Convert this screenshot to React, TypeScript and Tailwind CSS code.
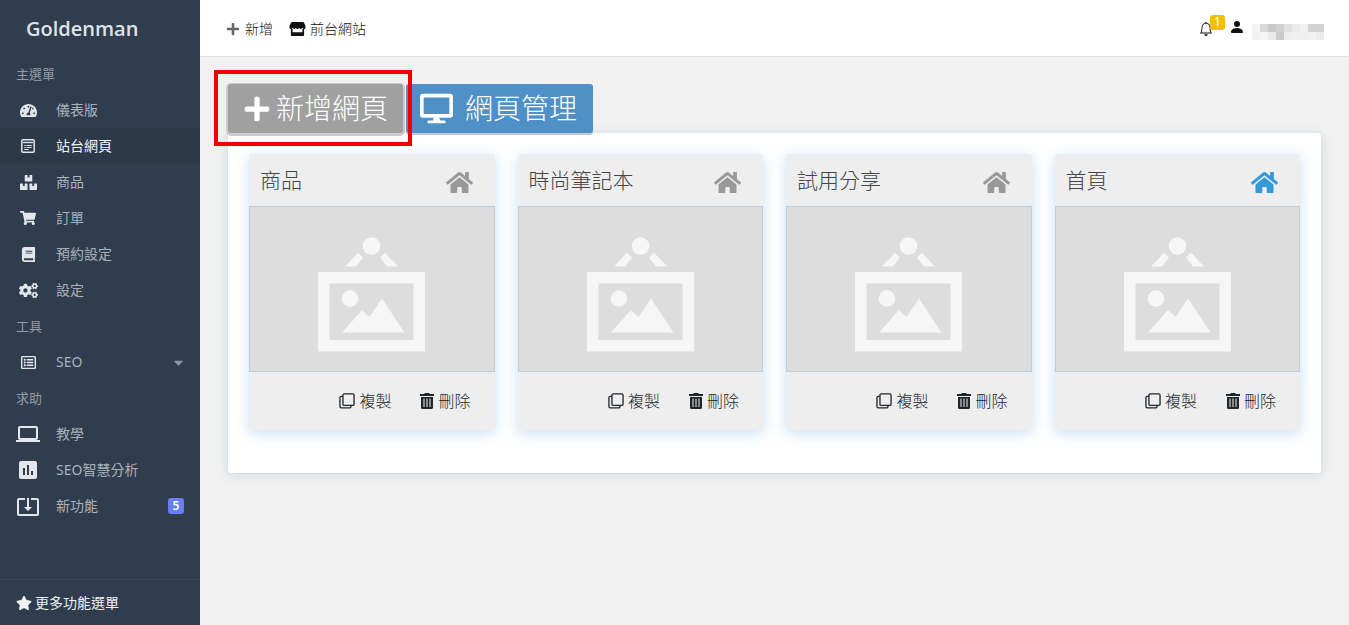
import React from "react";
import {
  FaTachometerAlt,
  FaBoxes,
  FaShoppingCart,
  FaBook,
  FaCogs,
  FaRegListAlt,
  FaHome,
  FaPlus,
  FaDesktop,
  FaStar,
  FaCaretDown,
} from "react-icons/fa";
import { MdLaptop, MdAssessment, MdSystemUpdateAlt } from "react-icons/md";
import { BsBell, BsPersonFill } from "react-icons/bs";

function PagesIcon() {
  return (
    <svg viewBox="0 0 14 14" className="size-[14px]" fill="none" stroke="currentColor" aria-hidden="true">
      <rect x="0.8" y="0.8" width="12.4" height="12.4" rx="1" strokeWidth="1.5" />
      <path d="M2 3.5h10" strokeWidth="1.4" />
      <path d="M3.300 6.500h1.400M5.500 6.500h5.200M3.300 8.500h1.400M5.500 8.500h5.200M3.300 10.500h4.400" strokeWidth="1" />
    </svg>
  );
}

function StoreIcon() {
  return (
    <svg viewBox="0 0 16 14" className="h-[14px] w-[17px]" fill="currentColor" aria-hidden="true">
      <path d="M2.600 0h10.800c.5 0 .8.200 1 .6L16 4v1.400c0 .9-.7 1.600-1.600 1.600-.8 0-1.600-.6-1.600-1.400 0 .8-.7 1.400-1.600 1.400-.8 0-1.600-.6-1.600-1.400C9.600 6.400 8.900 7 8 7s-1.600-.6-1.600-1.400C6.400 6.400 5.600 7 4.800 7c-.9 0-1.600-.6-1.600-1.400C3.200 6.400 2.400 7 1.600 7 .7 7 0 6.300 0 5.400V4L1.600.6c.2-.4.5-.6 1-.6z" />
      <path d="M1.400 7h1.700v3.200h9.800V7h1.700v6c0 .6-.4 1-1 1H2.400c-.6 0-1-.4-1-1z" />
    </svg>
  );
}

function CopyIcon() {
  return (
    <svg viewBox="0 0 17 17" className="size-4" fill="none" stroke="currentColor" strokeWidth="1.4" aria-hidden="true">
      <rect x="4.200" y="1" width="11.800" height="12.200" rx="1.300" />
      <path d="M4 3.600H2.400c-.8 0-1.400.5-1.400 1.300v9.500c0 .9.600 1.500 1.500 1.500h8.800c.8 0 1.400-.6 1.400-1.400v-1.100" />
    </svg>
  );
}

function TrashIcon() {
  return (
    <svg viewBox="0 0 14 16" className="h-4 w-[14px]" fill="currentColor" aria-hidden="true">
      <path d="M4.500 0h5v1H14v2H0V1h4.500z" />
      <path
        fillRule="evenodd"
        d="M1 4h12V14.500c0 .9-.6 1.500-1.500 1.500h-9C1.600 16 1 15.400 1 14.500zM3.500 5.500v8.500h1V5.500zM6.500 5.500v8.500h1V5.500zM9.500 5.500v8.500h1V5.500z"
      />
    </svg>
  );
}

function Placeholder() {
  return (
    <svg viewBox="0 0 107 116" className="h-[116px] w-[107px]" fill="#f6f6f6" aria-hidden="true">
      <circle cx="53.500" cy="9" r="8.800" />
      <path d="M40 15.500l5 5L38 29.500H27zM67 15.500l-5 5 7 9h11z" />
      <path fillRule="evenodd" d="M0 35h107v79.500H0zM11.500 46.500V103H95.500V46.500z" />
      <circle cx="32" cy="61.500" r="8.300" />
      <path d="M24 95.500l20-22.500 7.500 7L64 61.500l22.500 34z" />
    </svg>
  );
}

type Item = { label: string; icon: React.ReactNode; active?: boolean; badge?: string; caret?: boolean };

const groups: { title: string; items: Item[] }[] = [
  {
    title: "主選單",
    items: [
      { label: "儀表版", icon: <FaTachometerAlt size={17} /> },
      { label: "站台網頁", icon: <PagesIcon />, active: true },
      { label: "商品", icon: <FaBoxes size={17} /> },
      { label: "訂單", icon: <FaShoppingCart size={16} /> },
      { label: "預約設定", icon: <FaBook size={15} /> },
      { label: "設定", icon: <FaCogs size={19} /> },
    ],
  },
  { title: "工具", items: [{ label: "SEO", icon: <FaRegListAlt size={15} />, caret: true }] },
  {
    title: "求助",
    items: [
      { label: "教學", icon: <MdLaptop size={24} /> },
      { label: "SEO智慧分析", icon: <MdAssessment size={24} /> },
      { label: "新功能", icon: <MdSystemUpdateAlt size={25} />, badge: "5" },
    ],
  },
];

const pages = [
  { title: "商品", home: false },
  { title: "時尚筆記本", home: false },
  { title: "試用分享", home: false },
  { title: "首頁", home: true },
];

const mosaic = [
  ["#f5f5f5", "#d9d9d9", "#c9c9c9", "#d0d0d0", "#e1e1e1", "#ebebeb", "#f0f0f0", "#d3d3d3", "#d3d3d3"],
  ["#f1f1f1", "#f5f5f5", "#e9e9e9", "#cacaca", "#ededed", "#f0f0f0", "#efefef", "#f1f1f1", "#ececec"],
];

function Sidebar() {
  return (
    <aside className="flex w-[200px] shrink-0 flex-col bg-[#2f3d4e]">
      <div className="flex h-14 items-center pt-0.5 pl-[26px] font-['Open_Sans','Noto_Sans',sans-serif] text-xl font-semibold text-[#dfe3e8]">
        Goldenman
      </div>
      <nav className="flex-1 font-normal">
        {groups.map((g) => (
          <section key={g.title}>
            <h2 className="flex h-9 items-center pt-px pl-4 text-[13px] text-[#929ba6]">{g.title}</h2>
            <ul>
              {g.items.map((it) => (
                <li key={it.label}>
                  <a
                    href="#"
                    className={
                      it.active
                        ? "flex h-9 items-center bg-[#2b3948] px-4 text-sm text-[#f3f5f7]"
                        : "flex h-9 items-center px-4 text-sm text-[#a9b1bb]"
                    }
                  >
                    <span className="mr-4 flex w-6 shrink-0 justify-center text-[#e3e7ec]">{it.icon}</span>
                    <span className="flex-1">{it.label}</span>
                    {it.caret && <FaCaretDown size={15} className="-mr-0.5 text-[#8a949f]" />}
                    {it.badge && (
                      <span className="flex size-4 items-center justify-center rounded-[3px] bg-[#667ff5] text-xs font-semibold text-white">
                        {it.badge}
                      </span>
                    )}
                  </a>
                </li>
              ))}
            </ul>
          </section>
        ))}
      </nav>
      <a href="#" className="flex h-[46px] items-center gap-[3px] border-t border-[#3c495a] px-4 text-sm font-normal text-[#eef0f3]">
        <FaStar size={16} />
        更多功能選單
      </a>
    </aside>
  );
}

function Header() {
  return (
    <header className="flex h-[57px] items-center border-b border-[#e2e2e2] bg-white px-[25px] pt-px text-sm text-[#111]">
      <button type="button" className="ml-px flex items-center gap-[5px]">
        <FaPlus size={14} className="text-[#666]" />
        新增
      </button>
      <a href="#" className="ml-4 flex items-center gap-1">
        <StoreIcon />
        前台網站
      </a>
      <div className="ml-auto flex items-center">
        <button type="button" aria-label="通知" className="relative mr-4">
          <BsBell size={14} />
          <span className="absolute -top-[7px] left-[11px] flex size-[15px] items-center justify-center rounded-[3px] bg-[#f5bd14] text-xs font-normal text-white">
            1
          </span>
        </button>
        <BsPersonFill size={16} className="mb-1" />
        <span className="mt-1.5 ml-[7px] grid grid-cols-9">
          {mosaic.flat().map((c, i) => (
            <span key={i} className="size-2" style={{ backgroundColor: c }} />
          ))}
        </span>
      </div>
    </header>
  );
}

function PageCard({ title, home }: { title: string; home: boolean }) {
  return (
    <article className="rounded-[3px] bg-[#eee] shadow-[0_3px_14px_rgba(110,175,235,0.4)]">
      <div className="flex h-[52px] items-center justify-between pr-[22px] pl-[11px]">
        <h3 className="text-[21px] leading-[30px] text-[#444]">{title}</h3>
        <button type="button" aria-label="設為首頁" className="mt-1">
          <FaHome size={27} className={home ? "text-[#3498db]" : "text-[#999]"} />
        </button>
      </div>
      <div className="flex h-[166px] items-end justify-center border border-[#bccddc] bg-[#ddd] pb-[18px]">
        <Placeholder />
      </div>
      <div className="flex h-[58px] items-center justify-end gap-[29px] pr-6 text-base text-[#212529]">
        <button type="button" className="flex items-center gap-1">
          <CopyIcon />
          複製
        </button>
        <button type="button" className="flex items-center gap-1">
          <TrashIcon />
          刪除
        </button>
      </div>
    </article>
  );
}

export default function App() {
  return (
    <div className="flex min-h-screen bg-[#f1f1f1] font-['Noto_Sans','Noto_Sans_CJK_TC',sans-serif] font-light">
      <Sidebar />
      <div className="min-w-0 flex-1">
        <Header />
        <main className="px-7 pt-[27px]">
          <div className="relative z-10 flex gap-[3px] text-[28px] leading-[49px] text-white">
            <div className="relative">
              <button
                type="button"
                className="flex h-[49px] items-center gap-[5px] rounded-[3px] bg-[#a0a0a0] px-[15px] shadow-[0_1px_0_2px_#cbcbcb]"
              >
                <FaPlus size={28} />
                新增網頁
              </button>
              <span className="pointer-events-none absolute -top-[14px] -right-[9px] -bottom-[13px] -left-[14px] z-10 border-4 border-[#f00000]" />
            </div>
            <button
              type="button"
              className="flex h-[49px] items-center gap-3 rounded-[3px] bg-[#4f90c6] pr-4 pl-[14px] shadow-[0_2px_0_#c5c9cd]"
            >
              <FaDesktop size={33} />
              網頁管理
            </button>
          </div>
          <section className="grid grid-cols-4 gap-[23px] rounded-[2px] bg-white px-[21px] pt-[21px] pb-[43px] shadow-[0_0_1px_#b5c8d6,0_2px_12px_rgba(120,160,190,0.3)]">
            {pages.map((p) => (
              <PageCard key={p.title} title={p.title} home={p.home} />
            ))}
          </section>
        </main>
      </div>
    </div>
  );
}
